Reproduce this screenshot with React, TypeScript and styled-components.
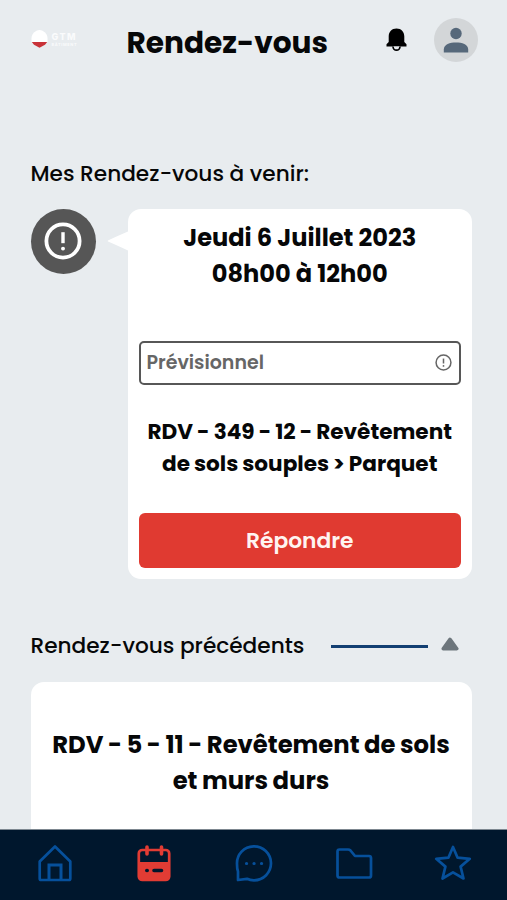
import React from "react";
import styled, { createGlobalStyle } from "styled-components";

const GlobalStyle = createGlobalStyle`
  *, *::before, *::after { box-sizing: border-box; }
  body {
    margin: 0;
    background: #e8ecef;
    color: #060708;
    font-family: Poppins, Inter, sans-serif;
  }
  svg { display: block; flex: none; }
`;

const Screen = styled.div`
  display: flex;
  flex-direction: column;
  width: 507px;
  height: 900px;
  overflow: hidden;
  background: #e8ecef;
`;

const Content = styled.main`
  flex: 1;
  min-height: 0;
  overflow: hidden;
  padding: 0 35.5px 0 30.5px;
`;

const Header = styled.header`
  display: flex;
  align-items: center;
  height: 84px;
  margin-right: -6px;
`;

const Brand = styled.div`
  display: flex;
  align-items: center;
  gap: 4px;
  width: 96px;
  padding-bottom: 6px;
`;

const BrandText = styled.div`
  display: flex;
  flex-direction: column;
  gap: 1px;
  color: #fafbfc;
`;

const BrandName = styled.span`
  font: 800 9px/9px Inter, sans-serif;
  letter-spacing: 1.4px;
`;

const BrandSub = styled.span`
  font: 700 4px/5px Inter, sans-serif;
  letter-spacing: 0.6px;
`;

const PageTitle = styled.h1`
  margin: 0;
  padding-top: 2px;
  font-size: 29.6px;
  font-weight: 700;
  line-height: 36px;
  white-space: nowrap;
`;

const HeaderActions = styled.div`
  display: flex;
  align-items: center;
  gap: 27px;
  margin-left: auto;
  padding-bottom: 4px;
`;

const Avatar = styled.div`
  display: grid;
  place-items: center;
  width: 44px;
  height: 44px;
  border-radius: 50%;
  background: #d3d6d8;
`;

const SectionTitle = styled.h2`
  margin: 0;
  font-size: 21.65px;
  font-weight: 500;
  line-height: 32px;
  white-space: nowrap;
`;

const Upcoming = styled.section`
  padding-top: 74px;
`;

const AppointmentRow = styled.div`
  display: flex;
  align-items: flex-start;
  margin-top: 18.5px;
`;

const StatusBadge = styled.div`
  display: grid;
  place-items: center;
  width: 65px;
  height: 65px;
  margin-right: 11px;
  border-radius: 50%;
  background: #565656;
  color: #fff;
`;

const Pointer = styled.svg`
  margin-top: 22px;
`;

const AppointmentCard = styled.article`
  display: flex;
  flex-direction: column;
  flex: 1;
  height: 370px;
  padding: 11px 10.5px 10.5px 11px;
  border-radius: 13px;
  background: #fff;
`;

const TextBlock = styled.div<{ $size: number; $leading: number; $wordGap?: number }>`
  display: flex;
  flex-direction: column;
  align-items: center;
  font-size: ${(p) => p.$size}px;
  font-weight: 700;
  line-height: ${(p) => p.$leading}px;
  word-spacing: ${(p) => p.$wordGap ?? 0}px;
  white-space: nowrap;
`;

const StatusField = styled.div`
  display: flex;
  align-items: center;
  justify-content: space-between;
  height: 44px;
  margin: 49px 0 31px;
  padding: 0 7px 1px 6px;
  border: 2.5px solid #575757;
  border-radius: 5px;
  color: #666;
  font-size: 19px;
  font-weight: 600;
`;

const ReplyButton = styled.button`
  height: 55px;
  margin-top: auto;
  padding: 0;
  border: 0;
  border-radius: 6px;
  background: #e03a31;
  color: #fff4f1;
  font: 600 21.8px/55px Poppins, Inter, sans-serif;
`;

const PreviousHeader = styled.div`
  display: flex;
  align-items: center;
  margin-top: 51px;
  padding-right: 12.5px;
`;

const Rule = styled.span`
  width: 97px;
  height: 3px;
  margin: 2px 13px 0 auto;
  background: #123f72;
`;

const Caret = styled.svg`
  margin-bottom: 3px;
`;

const PreviousCard = styled.article`
  height: 170px;
  margin-top: 20px;
  padding-top: 45px;
  border-radius: 13px 13px 0 0;
  background: #fff;
`;

const TabBar = styled.nav`
  display: grid;
  grid-template-columns: repeat(5, 1fr);
  flex: none;
  height: 71px;
  padding: 0 4px 0 5px;
  border-top: 1px solid #7d8790;
  background: #00172d;
`;

const Tab = styled.button<{ $active?: boolean }>`
  display: grid;
  place-items: center;
  padding: 0 0 4px;
  border: 0;
  background: none;
  color: ${(p) => (p.$active ? "#e23c34" : "#06509b")};
`;

const AlertIcon = ({ size, stroke, mark }: { size: number; stroke: number; mark: number }) => (
  <svg width={size} height={size} viewBox="0 0 38 38" fill="none" stroke="currentColor">
    <circle cx="19" cy="19" r="16.6" strokeWidth={stroke} />
    <path d="M19 10.200v11" strokeWidth={mark} />
    <circle cx="19" cy="26.600" r={mark * 0.58} fill="currentColor" stroke="none" />
  </svg>
);

const TabIcon = ({ children }: { children: React.ReactNode }) => (
  <svg
    width="38"
    height="38"
    viewBox="0 0 38 38"
    fill="none"
    stroke="currentColor"
    strokeWidth="2.700"
    strokeLinecap="round"
    strokeLinejoin="round"
  >
    {children}
  </svg>
);

export default function App() {
  return (
    <Screen>
      <GlobalStyle />
      <Content>
        <Header>
          <Brand>
            <svg width="17" height="18" viewBox="0 0 17 18">
              <path d="M5.500 .7Q8.500 -.5 11.500 .7Q16.500 3.500 16.500 8v4H.5V8Q.5 3.500 5.500 .7z" fill="#fff" />
              <path d="M.8 12h15.400L14 14.700l-5.500 3.100L3 14.700z" fill="#c83238" />
            </svg>
            <BrandText>
              <BrandName>GTM</BrandName>
              <BrandSub>BÂTIMENT</BrandSub>
            </BrandText>
          </Brand>
          <PageTitle>Rendez-vous</PageTitle>
          <HeaderActions>
            <svg width="21" height="24" viewBox="0 0 21 24" fill="#000">
              <path d="M10.500 .5C5.700 .5 2.700 3.800 2.700 8.500V14L.5 16.300V18.500h20v-2.200L18.300 14V8.500C18.300 3.800 15.300 .5 10.500 .5z" />
              <path d="M7 18.500a3.500 3.700 0 0 0 7 0" fill="#e8ecef" stroke="#000" strokeWidth="1.700" />
            </svg>
            <Avatar>
              <svg width="26" height="26" viewBox="0 0 26 26" fill="#56687a">
                <circle cx="13" cy="6.500" r="5.700" />
                <path d="M.8 25.500v-3c0-5.200 6.200-7 12.200-7s12.200 1.800 12.200 7v3z" />
              </svg>
            </Avatar>
          </HeaderActions>
        </Header>

        <Upcoming>
          <SectionTitle>Mes Rendez-vous à venir:</SectionTitle>
          <AppointmentRow>
            <StatusBadge>
              <AlertIcon size={38} stroke={3.8} mark={3.4} />
            </StatusBadge>
            <Pointer width="21" height="20" viewBox="0 0 21 20" fill="#fff">
              <path d="M1 9.500Q7 6.500 21 .5v19Q7 13 1 10.500Q.3 10 1 9.500z" />
            </Pointer>
            <AppointmentCard>
              <TextBlock $size={24.1} $leading={36}>
                <span>Jeudi 6 Juillet 2023</span>
                <span>08h00 à 12h00</span>
              </TextBlock>
              <StatusField>
                Prévisionnel
                <AlertIcon size={17} stroke={3.4} mark={3.4} />
              </StatusField>
              <TextBlock $size={21.6} $leading={32.4} $wordGap={-0.55}>
                <span>RDV - 349 - 12 - Revêtement</span>
                <span>de sols souples &gt; Parquet</span>
              </TextBlock>
              <ReplyButton type="button">Répondre</ReplyButton>
            </AppointmentCard>
          </AppointmentRow>
        </Upcoming>

        <section>
          <PreviousHeader>
            <SectionTitle>Rendez-vous précédents</SectionTitle>
            <Rule />
            <Caret width="18" height="14" viewBox="0 0 18 14">
              <path d="M9 2.300L15.800 11.700H2.200z" fill="#6d767c" stroke="#6d767c" strokeWidth="3.500" strokeLinejoin="round" />
            </Caret>
          </PreviousHeader>
          <PreviousCard>
            <TextBlock $size={24.3} $leading={36} $wordGap={-0.65}>
              <span>RDV - 5 - 11 - Revêtement de sols</span>
              <span>et murs durs</span>
            </TextBlock>
          </PreviousCard>
        </section>
      </Content>

      <TabBar>
        <Tab type="button" aria-label="Accueil">
          <TabIcon>
            <path d="M19 2.500L34.300 17.500V34.500Q34.300 36 32.800 36H5.200Q3.700 36 3.700 34.500V17.500z" />
            <path d="M13 35.500V21h12v14.500" strokeLinejoin="miter" strokeWidth="3" />
          </TabIcon>
        </Tab>
        <Tab type="button" aria-label="Rendez-vous" $active>
          <TabIcon>
            <rect x="3.800" y="6" width="30.400" height="30" rx="3.500" />
            <path d="M4 18h30v15q0 3-3 3H7q-3 0-3-3z" fill="currentColor" stroke="none" />
            <path d="M12 3v7M26.500 3v7" strokeWidth="3.600" />
            <path d="M11.800 26.500h.4M19 26.500h7.500" stroke="#00172d" strokeWidth="3.600" />
          </TabIcon>
        </Tab>
        <Tab type="button" aria-label="Messages">
          <TabIcon>
            <path d="M3 36V27.500C2 25 2 22.500 2 20A17 17 0 1 1 19 36.300C16 36.300 14 35.800 12 34.800z" />
            <path d="M11.500 19.500h.1M19 19.500h.1M26.500 19.500h.1" strokeWidth="3.200" />
          </TabIcon>
        </Tab>
        <Tab type="button" aria-label="Documents">
          <TabIcon>
            <path d="M4.500 5.500H13Q14.500 5.500 15.500 6.500L20 12H34Q36 12 36 14V31.500Q36 33.500 34 33.500H4.500Q2.500 33.500 2.500 31.500V7.500Q2.500 5.500 4.500 5.500z" />
          </TabIcon>
        </Tab>
        <Tab type="button" aria-label="Favoris">
          <TabIcon>
            <path d="M19 3l4.600 10.700 12.200 1.100-9.200 7.800 2.900 11.900L19 28.300 8.500 34.500l2.900-11.900L2.200 14.800l12.200-1.100z" />
          </TabIcon>
        </Tab>
      </TabBar>
    </Screen>
  );
}
